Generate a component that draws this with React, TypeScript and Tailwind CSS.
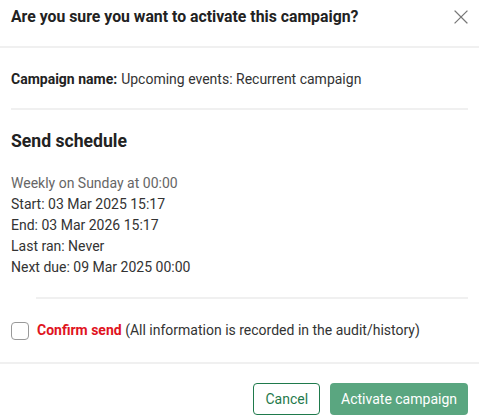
import React, { useState } from 'react';

const schedule = [
  'Start: 03 Mar 2025 15:17',
  'End: 03 Mar 2026 15:17',
  'Last ran: Never',
  'Next due: 09 Mar 2025 00:00',
];

export default function App() {
  const [confirmed, setConfirmed] = useState(false);

  return (
    <div className="w-[479px] h-[416px] overflow-hidden bg-white text-[#333] font-['Roboto','Liberation_Sans',sans-serif]">
      {/* Header */}
      <div className="flex items-start justify-between h-[48px] pl-[11px] pr-[9px] pt-[6px] border-b-2 border-[#f0f0f0]">
        <h2 className="text-[15.8px] leading-[22px] font-bold text-[#222]">Are you sure you want to activate this campaign?</h2>
        <button className="mt-[2px] text-[#777]">
          <svg className="w-[18px] h-[18px]" viewBox="0 0 24 24" fill="none" stroke="currentColor" strokeWidth="1.6" strokeLinecap="square">
            <path d="M4 4l16 16M20 4L4 20" />
          </svg>
        </button>
      </div>

      {/* Body */}
      <div className="px-[11px]">
        <p className="h-[62px] flex items-center text-[14px] border-b-2 border-[#f0f0f0] pt-[2px]">
          <span className="font-bold text-[#222] mr-1">Campaign name:</span>Upcoming events: Recurrent campaign
        </p>

        <h3 className="mt-[19px] text-[17.6px] leading-[24px] font-bold text-[#222]">Send schedule</h3>
        <div className="mt-[20px] text-[14px] leading-[21px]">
          <p className="text-[#666]">Weekly on Sunday at 00:00</p>
          {schedule.map(line => (
            <p key={line}>{line}</p>
          ))}
        </div>
        <div className="ml-[25px] mt-[19px] border-t-2 border-[#f0f0f0]" />

        <label className="flex items-center gap-[8px] h-[63px] text-[14px] cursor-pointer">
          <input
            type="checkbox"
            checked={confirmed}
            onChange={e => setConfirmed(e.target.checked)}
            className="appearance-none w-[18px] h-[18px] rounded-[4px] border-[1.5px] border-[#999] bg-white shrink-0"
          />
          <span>
            <span className="font-bold text-[#e0141e]">Confirm send</span> (All information is recorded in the audit/history)
          </span>
        </label>
      </div>

      {/* Footer */}
      <div className="flex justify-end gap-[10px] pt-[19px] pr-[11px] border-t-2 border-[#f0f0f0]">
        <button className="h-[32px] px-[11px] rounded-[4px] border border-[#1f7a4c] text-[14px] text-[#1f7a4c]">Cancel</button>
        <button
          disabled={!confirmed}
          className="h-[32px] px-[11px] rounded-[4px] bg-[#5aa680] text-[14px] text-white"
        >
          Activate campaign
        </button>
      </div>
    </div>
  );
}
